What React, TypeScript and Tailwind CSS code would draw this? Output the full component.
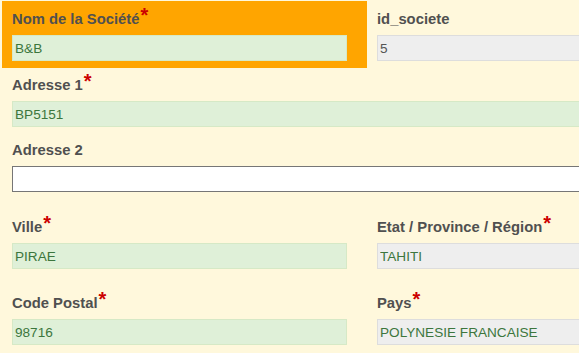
import React from 'react'

function Req() {
  return (
    <span className="relative -top-[2px] ml-[1px] font-bold text-[20px] leading-[0] text-[#cc0000]">*</span>
  )
}

interface FieldProps {
  label: string
  required?: boolean
  value: string
  tone?: 'ok' | 'ro' | 'plain'
  inputClass?: string
}

function Field({ label, required, value, tone = 'ok', inputClass = 'w-[335px]' }: FieldProps) {
  const toneClass =
    tone === 'ok'
      ? 'bg-[#dff0d8] border-[#d6e9c6] text-[#3c763d]'
      : tone === 'ro'
        ? 'bg-[#eeeeee] border-[#dddddd] text-[#3c763d]'
        : 'bg-white border-[#767676] text-[#555555]'
  return (
    <div>
      <div className="text-[14.8px] leading-[17px] font-bold text-[#505050] whitespace-nowrap">
        {label}
        {required && <Req />}
      </div>
      <input
        readOnly
        defaultValue={value}
        className={`mt-[7px] block h-[26px] border pl-[2px] text-[13.6px] outline-none ${toneClass} ${inputClass}`}
      />
    </div>
  )
}

export default function App() {
  return (
    <div className="h-screen w-full overflow-hidden bg-[#fff8dc] pt-[1px] pl-[2px] font-['Liberation_Sans',Arial,sans-serif]">
      {/* Row 1 */}
      <div className="flex">
        <div className="w-[365px] shrink-0 bg-[#ffa500] pt-[10px] pb-[7px] pl-[10px]">
          <Field label="Nom de la Société" required value="B&B" />
        </div>
        <div className="shrink-0 pt-[10px] pl-[10px]">
          <Field label="id_societe" value="5" tone="ro" inputClass="w-[335px] !text-[#555555]" />
        </div>
      </div>

      {/* Adresses */}
      <div className="mt-[9px] pl-[10px]">
        <Field label="Adresse 1" required value="BP5151" inputClass="w-[700px]" />
      </div>
      <div className="mt-[15px] pl-[10px]">
        <Field label="Adresse 2" value="" tone="plain" inputClass="w-[700px]" />
      </div>

      {/* Ville / Etat */}
      <div className="mt-[27px] flex">
        <div className="w-[365px] shrink-0 pl-[10px]">
          <Field label="Ville" required value="PIRAE" />
        </div>
        <div className="shrink-0 pl-[10px]">
          <Field label="Etat / Province / Région" required value="TAHITI" tone="ro" />
        </div>
      </div>

      {/* Code postal / Pays */}
      <div className="mt-[26px] flex">
        <div className="w-[365px] shrink-0 pl-[10px]">
          <Field label="Code Postal" required value="98716" />
        </div>
        <div className="shrink-0 pl-[10px]">
          <Field label="Pays" required value="POLYNESIE FRANCAISE" tone="ro" />
        </div>
      </div>
    </div>
  )
}
